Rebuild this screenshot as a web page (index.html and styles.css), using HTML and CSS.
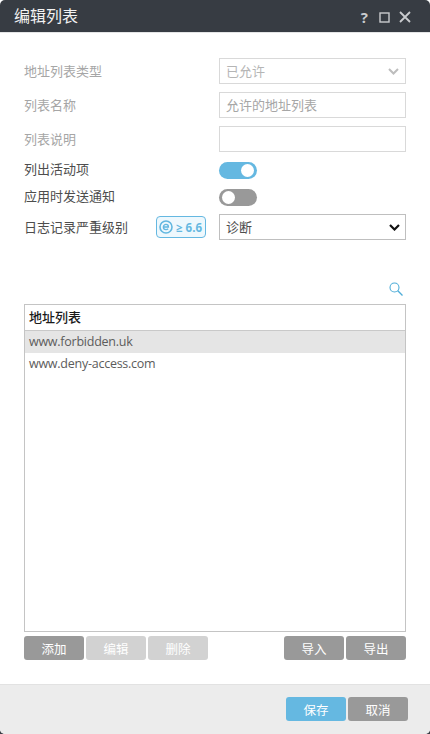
FILE: index.html
```html
<!DOCTYPE html>
<html lang="zh-CN">
<head>
  <meta charset="UTF-8" />
  <meta name="viewport" content="width=device-width, initial-scale=1.0"/>
  <title>编辑列表</title>
  <link rel="stylesheet" href="styles.css">
</head>
<body>
  <div class="dialog">
    <div class="title-bar">
      <span class="title">编辑列表</span>
      <div class="title-icons">
        <span class="help">?</span>
        <svg width="11" height="11" viewBox="0 0 11 11"><rect x="1" y="1" width="9" height="9" fill="none" stroke="#c9cbce" stroke-width="1.4"/></svg>
        <svg width="12" height="12" viewBox="0 0 12 12"><path d="M1 1l10 10M11 1L1 11" fill="none" stroke="#c9cbce" stroke-width="1.8"/></svg>
      </div>
    </div>

    <div class="content">
      <div class="form-row">
        <label class="muted">地址列表类型</label>
        <div class="field select-off">
          <span>已允许</span>
          <svg width="11" height="7" viewBox="0 0 11 7"><path d="M1 1l4.5 4.5L10 1" fill="none" stroke="#bdbdbd" stroke-width="2"/></svg>
        </div>
      </div>
      <div class="form-row">
        <label class="muted">列表名称</label>
        <div class="field value-off">允许的地址列表</div>
      </div>
      <div class="form-row">
        <label class="muted">列表说明</label>
        <div class="field"></div>
      </div>
      <div class="switch-row first">
        <label>列出活动项</label>
        <span class="toggle on"></span>
      </div>
      <div class="switch-row">
        <label>应用时发送通知</label>
        <span class="toggle"></span>
      </div>
      <div class="form-row last">
        <div class="with-badge">
          <label>日志记录严重级别</label>
          <span class="badge">
            <svg width="14" height="14" viewBox="0 0 14 14"><circle cx="7" cy="7" r="6" fill="none" stroke="#62b7e0" stroke-width="1.6"/><path d="M4.4 7h5c0-1.6-1-2.6-2.4-2.6S4.4 5.500 4.4 7s1 2.6 2.6 2.6c.9 0 1.6-.3 2.1-.8" fill="none" stroke="#62b7e0" stroke-width="1.4"/></svg>
            <span>≥ 6.6</span>
          </span>
        </div>
        <div class="field select-on">
          <span>诊断</span>
          <svg width="11" height="7" viewBox="0 0 11 7"><path d="M1 1l4.5 4.5L10 1" fill="none" stroke="#111" stroke-width="2.2"/></svg>
        </div>
      </div>

      <div class="search-line">
        <svg width="14" height="14" viewBox="0 0 14 14"><circle cx="5.5" cy="5.5" r="4.5" fill="none" stroke="#4fadd8" stroke-width="1.1"/><path d="M8.800 8.800L13.500 13.500" stroke="#4fadd8" stroke-width="1.3"/></svg>
      </div>

      <div class="list-box">
        <div class="list-head">地址列表</div>
        <div class="list-item selected">www.forbidden.uk</div>
        <div class="list-item">www.deny-access.com</div>
      </div>

      <div class="list-btns">
        <button class="btn">添加</button>
        <button class="btn off">编辑</button>
        <button class="btn off">删除</button>
        <button class="btn push">导入</button>
        <button class="btn">导出</button>
      </div>
    </div>

    <div class="footer">
      <button class="btn blue">保存</button>
      <button class="btn">取消</button>
    </div>
  </div>
</body>
</html>
```

FILE: styles.css
```css
html, body {
  height: 100%;
}

body {
  margin: 0;
  background: linear-gradient(#ffffff 50%, #3a3f46 50%);
  font-family: "Open Sans", "Noto Sans CJK SC", sans-serif;
  font-size: 13px;
  color: #4d4d4d;
}

.dialog {
  height: 734px;
  display: flex;
  flex-direction: column;
  background: #ffffff;
  border-radius: 5px;
  overflow: hidden;
}

.title-bar {
  height: 33px;
  flex: none;
  display: flex;
  align-items: center;
  justify-content: space-between;
  padding: 0 19px 2px 14px;
  box-sizing: border-box;
  background: #373c43;
  border-bottom: 1px solid #e4e5e6;
}

.title {
  color: #f2f2f2;
  font-size: 16px;
}

.title-icons {
  display: flex;
  align-items: center;
  gap: 9px;
  margin-top: 4px;
}

.help {
  color: #c9cbce;
  font-size: 15px;
  font-weight: bold;
  line-height: 12px;
  margin-right: 2px;
}

.content {
  flex: 1;
  padding: 25px 24px 0;
}

label {
  padding-bottom: 2px;
}

.form-row {
  display: flex;
  align-items: center;
  justify-content: space-between;
  height: 26px;
  margin-bottom: 8px;
}

.form-row.last {
  margin-bottom: 0;
}

.muted {
  color: #a6a6a6;
}

.field {
  width: 187px;
  height: 26px;
  box-sizing: border-box;
  display: flex;
  align-items: center;
  justify-content: space-between;
  padding: 0 6px 2px;
  background: #ffffff;
  border: 1px solid #d9d9d9;
}

.field svg {
  margin-top: 2px;
}

.select-off {
  color: #b5b5b5;
}

.value-off {
  color: #a6a6a6;
}

.select-on {
  border-color: #bfbfbf;
  color: #4d4d4d;
  padding-right: 5px;
}

.switch-row {
  display: flex;
  align-items: center;
  height: 17px;
  margin-bottom: 10px;
}

.switch-row.first {
  margin-top: 10px;
}

.switch-row.first + .switch-row {
  margin-bottom: 8px;
}

.switch-row label {
  width: 195px;
  padding-bottom: 5px;
}

.toggle {
  position: relative;
  width: 38px;
  height: 17px;
  border-radius: 9px;
  background: #999999;
}

.toggle::after {
  content: "";
  position: absolute;
  top: 2px;
  left: 3px;
  width: 13px;
  height: 13px;
  border-radius: 50%;
  background: #ffffff;
}

.toggle.on {
  background: #65b8e1;
}

.toggle.on::after {
  left: 22px;
}

.with-badge {
  flex: 1;
  display: flex;
  align-items: center;
  justify-content: space-between;
  margin-right: 13px;
}

.badge {
  display: flex;
  align-items: center;
  gap: 3px;
  height: 20px;
  padding: 0 3px 0 2px;
  border: 1px solid #65b8e1;
  border-radius: 4px;
  background: #eef8fd;
  color: #65b8e1;
  font-size: 11.5px;
  font-weight: bold;
  white-space: nowrap;
}

.search-line {
  display: flex;
  justify-content: flex-end;
  padding: 42px 3.5px 8px 0;
  height: 14px;
}

.list-box {
  height: 328px;
  box-sizing: border-box;
  border: 1px solid #c4c4c4;
}

.list-head {
  height: 25px;
  line-height: 25px;
  padding-left: 4px;
  color: #1a1a1a;
  font-weight: 500;
  border-bottom: 1px solid #c9c9c9;
}

.list-item {
  height: 22px;
  line-height: 22px;
  padding-left: 4px;
  color: #5c5c5c;
  font-size: 12.5px;
  letter-spacing: -0.25px;
}

.list-item.selected {
  background: #e5e5e5;
}

.list-btns {
  display: flex;
  gap: 2px;
  margin-top: 4px;
}

.btn {
  width: 60px;
  height: 24px;
  padding: 0;
  border: none;
  border-radius: 3px;
  background: #999999;
  color: #ffffff;
  font-family: inherit;
  font-size: 12.5px;
}

.btn.off {
  background: #d2d2d2;
}

.btn.push {
  margin-left: auto;
}

.btn.blue {
  background: #65b8e1;
}

.footer {
  flex: none;
  height: 50px;
  box-sizing: border-box;
  display: flex;
  justify-content: flex-end;
  align-items: flex-start;
  gap: 2px;
  padding: 12px 22px 0 0;
  background: #ececec;
  border-top: 1px solid #e2e2e2;
}
```
